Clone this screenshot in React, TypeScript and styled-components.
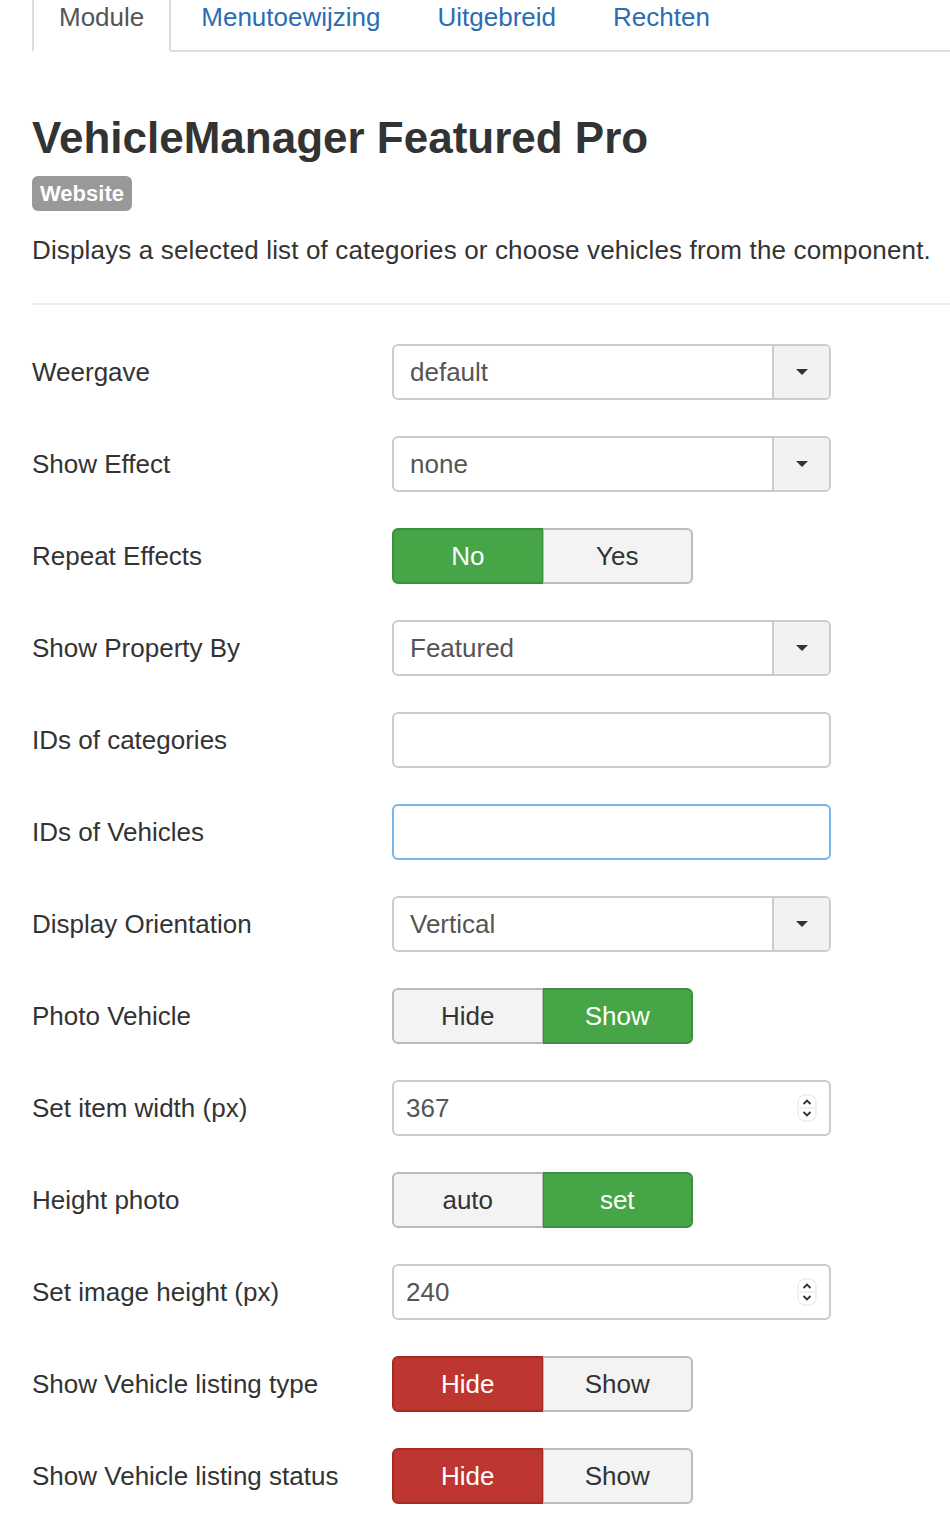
import { FC } from 'react'
import { createGlobalStyle, styled } from 'styled-components'

const GlobalStyle = createGlobalStyle`
  html, body {
    margin: 0;
    padding: 0;
    background: #fff;
  }
  body {
    font-family: "Liberation Sans", Arial, Helvetica, sans-serif;
    color: #333;
    -webkit-font-smoothing: antialiased;
  }
`

const Page = styled.div`
  padding-left: 32px;
  width: 918px;
`

const TabBar = styled.ul`
  display: flex;
  list-style: none;
  margin: 0;
  padding: 0;
  height: 50px;
  border-bottom: 2px solid #ddd;
`

const Tab = styled.li<{ $active?: boolean }>`
  box-sizing: border-box;
  height: 52px;
  padding: 0 25px;
  margin-right: 3px;
  font-size: 26px;
  line-height: 34px;
  color: ${({ $active }) => ($active ? '#555' : '#2a6db4')};
  background: ${({ $active }) => ($active ? '#fff' : 'transparent')};
  border: 2px solid ${({ $active }) => ($active ? '#ddd' : 'transparent')};
  border-top: none;
  border-bottom-color: ${({ $active }) => ($active ? '#fff' : 'transparent')};
`

const Title = styled.h1`
  margin: 62px 0 0;
  font-size: 44px;
  line-height: 48px;
  font-weight: bold;
  color: #333;
`

const Badge = styled.span`
  display: inline-block;
  margin-top: 14px;
  padding: 0 8px;
  height: 35px;
  line-height: 36px;
  border-radius: 6px;
  background: #999;
  color: #fff;
  font-size: 22px;
  font-weight: bold;
`

const Description = styled.p`
  margin: 22px 0 0;
  font-size: 26px;
  line-height: 34px;
  letter-spacing: 0.15px;
  white-space: nowrap;
`

const Divider = styled.hr`
  margin: 36px 0 0;
  border: none;
  border-top: 2px solid #eee;
`

const Form = styled.div`
  display: flex;
  flex-direction: column;
  gap: 36px;
  padding-top: 39px;
`

const Row = styled.div`
  display: grid;
  grid-template-columns: 360px 439px;
  align-items: center;
  height: 56px;
`

const Label = styled.label`
  font-size: 26px;
  color: #333;
`

const FieldBox = styled.div<{ $focus?: boolean }>`
  box-sizing: border-box;
  display: flex;
  align-items: center;
  height: 56px;
  border: 2px solid ${({ $focus }) => ($focus ? '#75b5ea' : '#ccc')};
  border-radius: 6px;
  background: #fff;
  font-size: 26px;
  color: #555;
  overflow: hidden;
`

const SelectValue = styled.span`
  flex: 1;
  padding-left: 16px;
`

const SelectAddon = styled.span`
  width: 55px;
  align-self: stretch;
  display: flex;
  align-items: center;
  justify-content: center;
  background: #f2f2f2;
  border-left: 2px solid #ccc;
`

const Caret = styled.span`
  width: 0;
  height: 0;
  border-left: 6px solid transparent;
  border-right: 6px solid transparent;
  border-top: 6px solid #333;
`

const NumberValue = styled.span`
  flex: 1;
  padding-left: 12px;
`

const Spinner = styled.svg`
  margin-right: 12px;
`

const Toggle = styled.div`
  display: flex;
  width: 301px;
  height: 56px;
`

type Tone = 'off' | 'success' | 'danger'

const ToggleButton = styled.span<{ $tone: Tone; $first?: boolean }>`
  box-sizing: border-box;
  flex: 1;
  display: flex;
  align-items: center;
  justify-content: center;
  font-size: 26px;
  border: 2px solid;
  border-radius: ${({ $first }) => ($first ? '6px 0 0 6px' : '0 6px 6px 0')};
  ${({ $first }) => ($first ? 'border-right-width: 1px;' : 'border-left-width: 1px;')}
  ${({ $tone }) =>
    $tone === 'success'
      ? 'background: #46a546; border-color: #3c8f3c; color: #fff;'
      : $tone === 'danger'
        ? 'background: #bd362f; border-color: #a52c26; color: #fff;'
        : 'background: #f3f3f3; border-color: #bbb; color: #333;'}
`

const Select: FC<{ value: string }> = ({ value }) => (
  <FieldBox>
    <SelectValue>{value}</SelectValue>
    <SelectAddon>
      <Caret />
    </SelectAddon>
  </FieldBox>
)

const NumberField: FC<{ value: string }> = ({ value }) => (
  <FieldBox>
    <NumberValue>{value}</NumberValue>
    <Spinner width="20" height="28" viewBox="0 0 20 28">
      <rect x="1" y="1" width="18" height="26" rx="7" fill="#fff" stroke="#e3e3e3" />
      <line x1="2" y1="14" x2="18" y2="14" stroke="#e3e3e3" />
      <path d="M6.5 10 L10 6.5 L13.5 10" fill="none" stroke="#333" strokeWidth="1.8" />
      <path d="M6.5 18 L10 21.5 L13.5 18" fill="none" stroke="#333" strokeWidth="1.8" />
    </Spinner>
  </FieldBox>
)

const Switch: FC<{ left: string; right: string; leftTone: Tone; rightTone: Tone }> = ({
  left,
  right,
  leftTone,
  rightTone,
}) => (
  <Toggle>
    <ToggleButton $first $tone={leftTone}>
      {left}
    </ToggleButton>
    <ToggleButton $tone={rightTone}>{right}</ToggleButton>
  </Toggle>
)

const App: FC = () => {
  return (
    <>
      <GlobalStyle />
      <Page>
        <TabBar>
          <Tab $active>Module</Tab>
          <Tab>Menutoewijzing</Tab>
          <Tab>Uitgebreid</Tab>
          <Tab>Rechten</Tab>
        </TabBar>
        <Title>VehicleManager Featured Pro</Title>
        <Badge>Website</Badge>
        <Description>
          Displays a selected list of categories or choose vehicles from the component.
        </Description>
        <Divider />
        <Form>
          <Row>
            <Label>Weergave</Label>
            <Select value="default" />
          </Row>
          <Row>
            <Label>Show Effect</Label>
            <Select value="none" />
          </Row>
          <Row>
            <Label>Repeat Effects</Label>
            <Switch left="No" right="Yes" leftTone="success" rightTone="off" />
          </Row>
          <Row>
            <Label>Show Property By</Label>
            <Select value="Featured" />
          </Row>
          <Row>
            <Label>IDs of categories</Label>
            <FieldBox />
          </Row>
          <Row>
            <Label>IDs of Vehicles</Label>
            <FieldBox $focus />
          </Row>
          <Row>
            <Label>Display Orientation</Label>
            <Select value="Vertical" />
          </Row>
          <Row>
            <Label>Photo Vehicle</Label>
            <Switch left="Hide" right="Show" leftTone="off" rightTone="success" />
          </Row>
          <Row>
            <Label>Set item width (px)</Label>
            <NumberField value="367" />
          </Row>
          <Row>
            <Label>Height photo</Label>
            <Switch left="auto" right="set" leftTone="off" rightTone="success" />
          </Row>
          <Row>
            <Label>Set image height (px)</Label>
            <NumberField value="240" />
          </Row>
          <Row>
            <Label>Show Vehicle listing type</Label>
            <Switch left="Hide" right="Show" leftTone="danger" rightTone="off" />
          </Row>
          <Row>
            <Label>Show Vehicle listing status</Label>
            <Switch left="Hide" right="Show" leftTone="danger" rightTone="off" />
          </Row>
        </Form>
      </Page>
    </>
  )
}

export default App
